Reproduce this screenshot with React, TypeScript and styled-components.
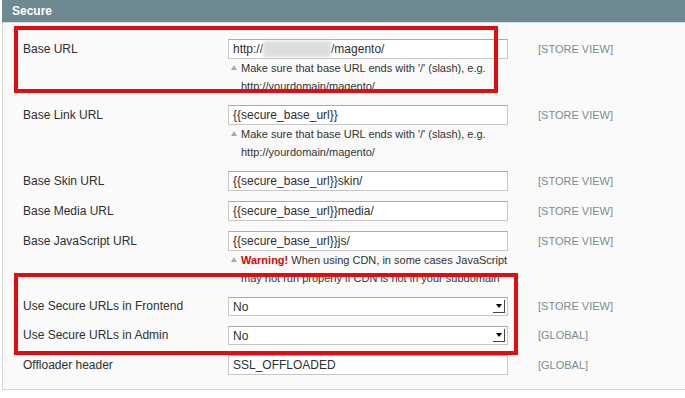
import { FC, ReactNode } from 'react';
import styled, { createGlobalStyle } from 'styled-components';

const GlobalStyle = createGlobalStyle`
   body {
      margin: 0;
      background: #fff;
      font-family: "Liberation Sans", Arial, sans-serif;
   }
`;

const Page = styled.div`
   position: relative;
   width: 685px;
   height: 398px;
   overflow: hidden;
`;

const Section = styled.div`
   margin: 0 0 0 2px;
   width: 685px;
`;

const Header = styled.div`
   height: 22px;
   line-height: 22px;
   padding-left: 10px;
   background: #6f8992;
   border-bottom: 1px solid #d5dee1;
   color: #fff;
   font-weight: bold;
   font-size: 12px;
`;

const Fieldset = styled.div`
   background: #fafafa;
   border: 1px solid #d6d6d6;
   border-top: 0;
   height: 367px;
   box-sizing: border-box;
   padding: 11px 0 0 20px;
`;

const Form = styled.div`
   display: grid;
   grid-template-columns: 205px 280px 150px;
`;

const Label = styled.div<{ $tight?: boolean }>`
   padding: 5px 0;
   line-height: ${p => (p.$tight ? 19 : 20)}px;
   font-size: 12px;
   color: #2f2f2f;
`;

const Value = styled.div`
   padding: 5px 0;
`;

const Scope = styled.div<{ $tight?: boolean }>`
   padding: 5px 0 5px 30px;
   line-height: ${p => (p.$tight ? 19 : 20)}px;
   font-size: 11px;
   color: #7a8b93;
`;

const Input = styled.div<{ $tight?: boolean }>`
   height: ${p => (p.$tight ? 19 : 20)}px;
   box-sizing: border-box;
   border: 1px solid #c6c6c6;
   border-top-color: #aaa;
   background: #fff;
   padding: 0 4px;
   font-size: 12px;
   color: #2f2f2f;
   display: flex;
   align-items: center;
   position: relative;
`;

const Blur = styled.span`
   display: inline-block;
   width: 68px;
   height: 16px;
   background: #dedede;
   filter: blur(1.5px);
`;

const Arrow = styled.span`
   position: absolute;
   right: 2px;
   top: 2px;
   width: 12px;
   height: 13px;
   box-sizing: border-box;
   border-right: 1px solid #444;
   border-bottom: 1px solid #444;
   background: #fff;
   display: flex;
   align-items: center;
   justify-content: center;

   &::after {
      content: '';
      border-left: 3px solid transparent;
      border-right: 3px solid transparent;
      border-top: 4px solid #000;
   }
`;

const Note = styled.div`
   position: relative;
   padding-left: 13px;
   line-height: 18px;
   font-size: 11px;
   color: #333;

   &::before {
      content: '';
      position: absolute;
      left: 3px;
      top: 6px;
      border-left: 3px solid transparent;
      border-right: 3px solid transparent;
      border-bottom: 5px solid #a9a9a9;
   }
`;

const Warn = styled.b`
   color: #d40707;
`;

const Mark = styled.div<{ $l: number; $t: number; $w: number; $h: number }>`
   position: absolute;
   left: ${p => p.$l}px;
   top: ${p => p.$t}px;
   width: ${p => p.$w}px;
   height: ${p => p.$h}px;
   box-sizing: border-box;
   border: 4px solid #e10b12;
`;

interface RowProps {
   label: string;
   scope: string;
   select?: boolean;
   note?: ReactNode;
   children: ReactNode;
}

const Row: FC<RowProps> = ({ label, scope, select, note, children }) => (
   <>
      <Label $tight={select}>{label}</Label>
      <Value>
         <Input $tight={select}>
            {children}
            {select && <Arrow />}
         </Input>
         {note && <Note>{note}</Note>}
      </Value>
      <Scope $tight={select}>{scope}</Scope>
   </>
);

const slashNote = (
   <>
      Make sure that base URL ends with '/' (slash), e.g.
      <br />
      http://yourdomain/magento/
   </>
);

const App: FC = () => (
   <Page>
      <GlobalStyle />
      <Section>
         <Header>Secure</Header>
         <Fieldset>
            <Form>
               <Row label="Base URL" scope="[STORE VIEW]" note={slashNote}>
                  http://<Blur />/magento/
               </Row>
               <Row label="Base Link URL" scope="[STORE VIEW]" note={slashNote}>
                  {'{{secure_base_url}}'}
               </Row>
               <Row label="Base Skin URL" scope="[STORE VIEW]">
                  {'{{secure_base_url}}skin/'}
               </Row>
               <Row label="Base Media URL" scope="[STORE VIEW]">
                  {'{{secure_base_url}}media/'}
               </Row>
               <Row
                  label="Base JavaScript URL"
                  scope="[STORE VIEW]"
                  note={
                     <>
                        <Warn>Warning!</Warn> When using CDN, in some cases JavaScript
                        <br />
                        may not run properly if CDN is not in your subdomain
                     </>
                  }
               >
                  {'{{secure_base_url}}js/'}
               </Row>
               <Row label="Use Secure URLs in Frontend" scope="[STORE VIEW]" select>
                  No
               </Row>
               <Row label="Use Secure URLs in Admin" scope="[GLOBAL]" select>
                  No
               </Row>
               <Row label="Offloader header" scope="[GLOBAL]">
                  SSL_OFFLOADED
               </Row>
            </Form>
         </Fieldset>
      </Section>
      <Mark $l={14} $t={26} $w={484} $h={67} />
      <Mark $l={14} $t={273} $w={504} $h={82} />
   </Page>
);

export default App;
